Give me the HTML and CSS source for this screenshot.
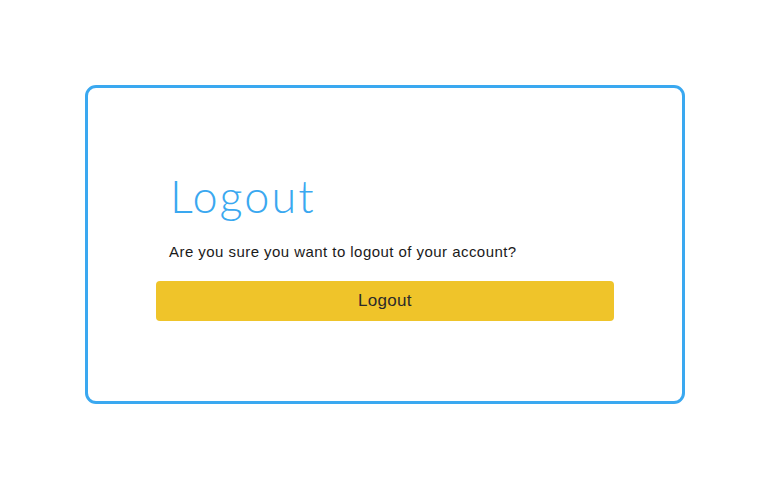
FILE: index.html
```html
<!DOCTYPE html>
<html>
<head>
<meta charset="utf-8">
<link rel="stylesheet" href="styles.css">
</head>
<body>
<div class="page">
  <div class="card">
    <h1 class="title">Logout</h1>
    <p class="message">Are you sure you want to logout of your account?</p>
    <button class="btn" type="button">Logout</button>
  </div>
</div>
</body>
</html>
```
FILE: styles.css
```css
* { box-sizing: border-box; }
html, body { margin: 0; padding: 0; background: #fff; }
.page {
  display: flex;
  justify-content: center;
  padding-top: 85px;
  padding-right: 1px;
}
.card {
  width: 600px;
  height: 319px;
  border: 3px solid #3aa8f0;
  border-radius: 11px;
  padding: 76px 68px 0 68px;
  display: flex;
  flex-direction: column;
}
.title {
  margin: 0 0 0 14px;
  font-family: "Lato", "Noto Sans", sans-serif;
  font-weight: 300;
  font-size: 45px;
  letter-spacing: 2px;
  line-height: 64px;
  color: #3aa8f0;
}
.message {
  margin: 14px 0 0 13px;
  font-family: "Liberation Sans", Arial, sans-serif;
  font-size: 15px;
  letter-spacing: 0.45px;
  line-height: 20px;
  color: #1a1a1a;
}
.btn {
  margin-top: 19px;
  height: 40px;
  width: 100%;
  border: none;
  border-radius: 4px;
  background: #efc42a;
  color: #2b2b2b;
  font-family: "Liberation Sans", Arial, sans-serif;
  font-size: 17px;
  letter-spacing: 0.3px;
}
```
